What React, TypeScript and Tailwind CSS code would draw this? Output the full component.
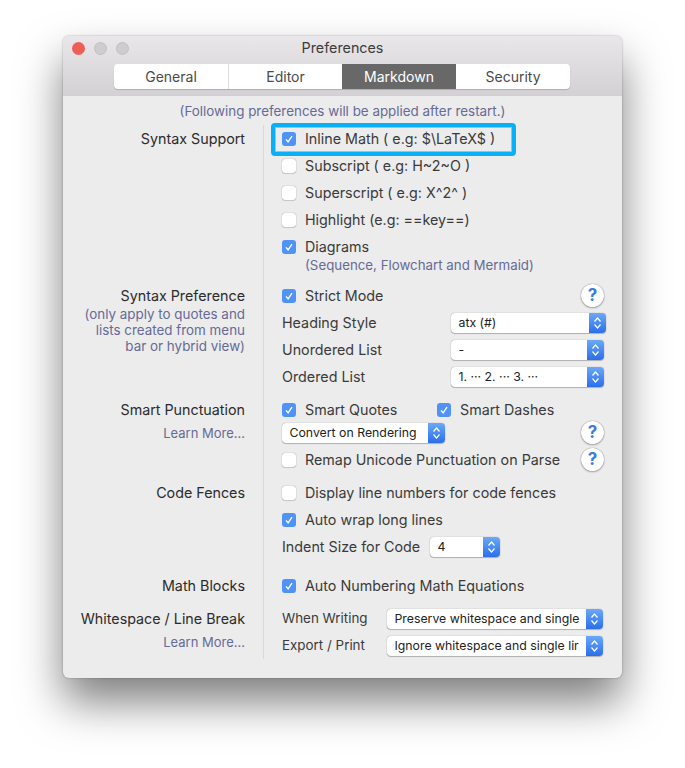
import React from 'react';

const Check: React.FC<{ on?: boolean }> = ({ on }) => (
  <span
    className={`w-[14px] h-[14px] rounded-[3px] shrink-0 flex items-center justify-center ${
      on ? 'bg-[#4f93f7]' : 'bg-white shadow-[0_0_1px_rgba(0,0,0,0.5),0_1px_1px_rgba(0,0,0,0.12)]'
    }`}
  >
    {on && (
      <svg width="10" height="10" viewBox="0 0 10 10" fill="none">
        <path d="M2 5.4 L4.1 7.8 L8 2.2" stroke="white" strokeWidth="1.4" />
      </svg>
    )}
  </span>
);

const CheckItem: React.FC<{ on?: boolean; label: string; className?: string }> = ({ on, label, className }) => (
  <div className={`flex items-center whitespace-nowrap ${className || ''}`}>
    <Check on={on} />
    <span className="ml-[9px]">{label}</span>
  </div>
);

const Select: React.FC<{ value: string; className: string }> = ({ value, className }) => (
  <div className={`h-[20px] flex rounded-[4px] bg-white shadow-[0_0_1px_rgba(0,0,0,0.45),0_1px_1px_rgba(0,0,0,0.22)] text-[12.3px] text-[#222] overflow-hidden ${className}`}>
    <span className="flex-1 min-w-0 whitespace-nowrap pl-[7.5px] leading-[20px]">{value}</span>
    <span className="w-[17px] shrink-0 bg-gradient-to-b from-[#6aa9f8] to-[#2c6ee8] flex items-center justify-center">
      <svg width="9" height="14" viewBox="0 0 9 14" fill="none">
        <path d="M1.5 5.5 L4.5 2 L7.5 5.5 M1.5 8.5 L4.5 12 L7.5 8.5" stroke="white" strokeWidth="1.2" />
      </svg>
    </span>
  </div>
);

const Help = () => (
  <span className="ml-auto mr-[2px] w-[23px] h-[23px] rounded-full bg-white shrink-0 flex items-center justify-center shadow-[0_0_1px_rgba(0,0,0,0.55),0_1px_2px_rgba(0,0,0,0.28)] text-[#3b7ddd] font-bold text-[17px]">
    ?
  </span>
);

const Row: React.FC<{ children: React.ReactNode; className?: string }> = ({ children, className }) => (
  <div className={`h-[27px] flex items-center ${className || ''}`}>{children}</div>
);

interface SectionProps {
  title: string;
  note?: React.ReactNode;
  children: React.ReactNode;
}

// left caption column + right options column, the divider line is the right column's border
const Section: React.FC<SectionProps> = ({ title, note, children }) => (
  <div className="flex">
    <div className="w-[182px] shrink-0 text-right">
      <div className="h-[27px] leading-[27px] text-[#2b2b2b] whitespace-nowrap">{title}</div>
      {note}
    </div>
    <div className="ml-[18px] flex-1 border-l border-[#d9d9d9] pl-[18px] pr-[16px]">{children}</div>
  </div>
);

const Gap: React.FC<{ h: string }> = ({ h }) => (
  <div className="flex">
    <div className="w-[182px] shrink-0" />
    <div className={`ml-[18px] border-l border-[#d9d9d9] ${h}`} />
  </div>
);

const LearnMore = () => <div className="text-[#666a96] text-[13px] leading-[18px] mt-[1px]">Learn More...</div>;

export default function App() {
  return (
    <div className="h-[768px] bg-white overflow-hidden pt-[36px] pl-[63px] font-['Inter','Liberation_Sans',sans-serif] text-[14.3px] text-[#3a3a3a]">
      <div className="w-[559px] h-[642px] rounded-[6px] bg-[#ececec] shadow-[0_0_2px_rgba(0,0,0,0.35),0_24px_44px_rgba(0,0,0,0.5)] overflow-hidden">
        <div className="h-[60px] relative bg-gradient-to-b from-[#e9e7e9] to-[#d3d1d3] border-b border-[#d0d0d0]">
          <div className="flex items-center gap-[9px] pl-[9px] pt-[6px]">
            <span className="w-[13px] h-[13px] rounded-full bg-[#ec5f57]" />
            <span className="w-[13px] h-[13px] rounded-full bg-[#cdcdcd] border border-[#c0c0c0]" />
            <span className="w-[13px] h-[13px] rounded-full bg-[#cdcdcd] border border-[#c0c0c0]" />
          </div>
          <div className="absolute top-[3px] left-0 right-0 text-center text-[14.3px] text-[#3c3c3c] leading-[18px]">Preferences</div>
          <div className="flex ml-[51px] mt-[9px] w-[456px] h-[25px] rounded-[4px] bg-white overflow-hidden shadow-[0_1px_1px_rgba(0,0,0,0.18)] text-[14px] text-[#4a4a4a] leading-[25px] text-center">
            <div className="w-[115px] border-r border-[#dcdcdc]">General</div>
            <div className="w-[113px]">Editor</div>
            <div className="w-[114px] bg-[#686868] text-white">Markdown</div>
            <div className="w-[114px]">Security</div>
          </div>
        </div>

        <div className="text-center text-[13.4px] text-[#666a96] leading-[18px] pt-[6px] h-[24px]">
          (Following preferences will be applied after restart.)
        </div>

        <div className="h-[5px]" />
        <Section title="Syntax Support">
          <Row className="relative">
            <CheckItem on label="Inline Math ( e.g: $\LaTeX$ )" />
            <span className="absolute left-[-11px] top-[-2px] w-[245px] h-[33px] rounded-[4px] border-[4px] border-[#0ab0f5] shadow-[inset_0_0_0_1px_rgba(0,0,0,0.22)]" />
          </Row>
          <Row><CheckItem label="Subscript ( e.g: H~2~O )" /></Row>
          <Row><CheckItem label="Superscript ( e.g: X^2^ )" /></Row>
          <Row><CheckItem label="Highlight (e.g: ==key==)" /></Row>
          <Row><CheckItem on label="Diagrams" /></Row>
          <div className="h-[18px] mt-[-4px] pl-[23px] text-[13.3px] leading-[18px] text-[#666a96]">(Sequence, Flowchart and Mermaid)</div>
        </Section>
        <Gap h="h-[8px]" />
        <Section
          title="Syntax Preference"
          note={
            <div className="text-[#666a96] text-[13.4px] leading-[16px] mt-[-3px]">
              (only apply to quotes and
              <br />
              lists created from menu
              <br />
              bar or hybrid view)
            </div>
          }
        >
          <Row>
            <CheckItem on label="Strict Mode" />
            <Help />
          </Row>
          <Row>
            <span className="w-[169px]">Heading Style</span>
            <Select value="atx (#)" className="w-[155px]" />
          </Row>
          <Row>
            <span className="w-[169px]">Unordered List</span>
            <Select value="-" className="w-[153px]" />
          </Row>
          <Row>
            <span className="w-[169px]">Ordered List</span>
            <Select value="1. ··· 2. ··· 3. ···" className="w-[153px]" />
          </Row>
        </Section>
        <Gap h="h-[6px]" />
        <Section title="Smart Punctuation" note={<LearnMore />}>
          <Row>
            <CheckItem on label="Smart Quotes" className="w-[155px]" />
            <CheckItem on label="Smart Dashes" />
          </Row>
          <Row className="mt-[-4px]">
            <Select value="Convert on Rendering" className="w-[163px]" />
            <Help />
          </Row>
          <Row>
            <CheckItem label="Remap Unicode Punctuation on Parse" />
            <Help />
          </Row>
        </Section>
        <Gap h="h-[6px]" />
        <Section title="Code Fences">
          <Row><CheckItem label="Display line numbers for code fences" /></Row>
          <Row><CheckItem on label="Auto wrap long lines" /></Row>
          <Row>
            <span className="w-[148px] whitespace-nowrap">Indent Size for Code</span>
            <Select value="4" className="w-[70px]" />
          </Row>
        </Section>
        <Gap h="h-[12px]" />
        <Section title="Math Blocks">
          <Row><CheckItem on label="Auto Numbering Math Equations" /></Row>
        </Section>
        <Gap h="h-[6px]" />
        <Section title="Whitespace / Line Break" note={<LearnMore />}>
          <Row>
            <span className="w-[105px] text-[13.4px]">When Writing</span>
            <Select value="Preserve whitespace and single" className="w-[216px]" />
          </Row>
          <Row>
            <span className="w-[105px] text-[13.4px]">Export / Print</span>
            <Select value="Ignore whitespace and single lir" className="w-[216px]" />
          </Row>
        </Section>
      </div>
    </div>
  );
}
